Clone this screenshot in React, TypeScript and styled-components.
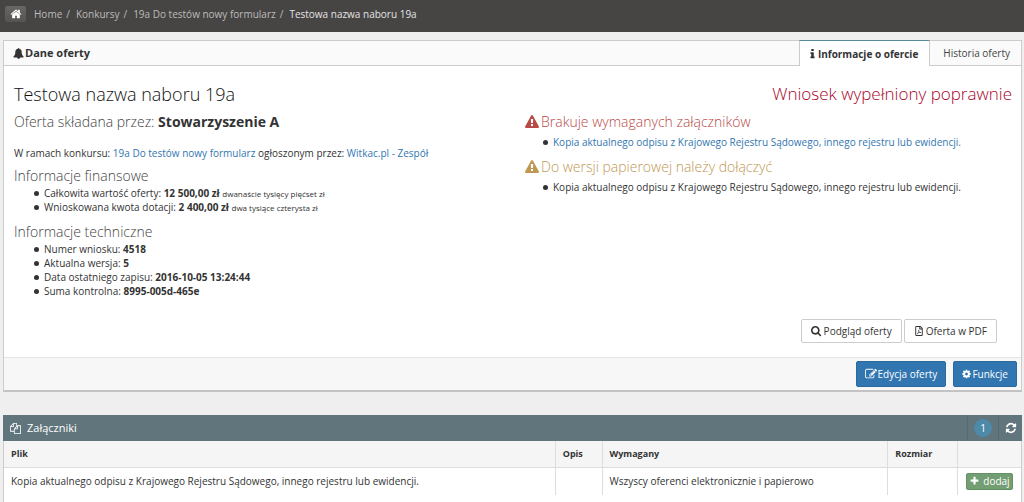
import React from "react";
import styled, { createGlobalStyle, css } from "styled-components";
import { FaRegFilePdf } from "react-icons/fa";

const Global = createGlobalStyle`
  *, *::before, *::after { box-sizing: border-box; }
  body {
    margin: 0;
    background: #efefef;
    color: #333;
    font-family: "Open Sans", "Liberation Sans", sans-serif;
    font-size: 10px;
    line-height: 14px;
  }
  a { color: #3276b1; text-decoration: none; }
  h1, h2, h3, p, ul, ol { margin: 0; padding: 0; }
`;

const glyphs = {
  home: { x: 0, w: 1792, d: "M1472 992v480q0 26-19 45t-45 19h-384v-384h-256v384h-384q-26 0-45-19t-19-45v-480q0-1 .5-3t.5-3l575-474 575 474q1 2 1 6zm223-69l-62 74q-8 9-21 11h-3q-13 0-21-7l-692-577-692 577q-12 8-24 7-13-2-21-11l-62-74q-8-10-7-23.5t11-21.5l719-599q32-26 76-26t76 26l244 204v-195q0-14 9-23t23-9h192q14 0 23 9t9 23v408l219 182q10 8 11 21.5t-7 23.5z" },
  bell: { x: 0, w: 1792, d: "M912 1696q0-16-16-16-59 0-101.5-42.5t-42.5-101.5q0-16-16-16t-16 16q0 73 51.5 124.5t124.5 51.5q16 0 16-16zm816-288q0 52-38 90t-90 38h-448q0 106-75 181t-181 75-181-75-75-181h-448q-52 0-90-38t-38-90q50-42 91-88t85-119.5 74.5-158.5 50-206 19.5-260q0-152 117-282.5t307-158.5q-8-19-8-39 0-40 28-68t68-28 68 28 28 68q0 20-8 39 190 28 307 158.5t117 282.5q0 139 19.5 260t50 206 74.5 158.5 85 119.5 91 88z" },
  info: { x: 512, w: 768, d: "M1216 1344v128q0 26-19 45t-45 19h-512q-26 0-45-19t-19-45v-128q0-26 19-45t45-19h64v-384h-64q-26 0-45-19t-19-45v-128q0-26 19-45t45-19h384q26 0 45 19t19 45v576h64q26 0 45 19t19 45zm-128-1152v192q0 26-19 45t-45 19h-256q-26 0-45-19t-19-45v-192q0-26 19-45t45-19h256q26 0 45 19t19 45z" },
  warning: { x: 0, w: 1792, d: "M1024 1375v-190q0-14-9.5-23.5t-22.5-9.5h-192q-13 0-22.5 9.5t-9.5 23.5v190q0 14 9.5 23.5t22.5 9.5h192q13 0 22.5-9.5t9.5-23.5zm-2-374l18-459q0-12-10-19-13-11-24-11h-220q-11 0-24 11-10 7-10 21l17 457q0 10 10 16.5t24 6.5h185q14 0 23.5-6.5t10.5-16.5zm-14-934l768 1408q35 63-2 126-17 29-46.5 46t-63.5 17h-1536q-34 0-63.5-17t-46.5-46q-37-63-2-126l768-1408q17-31 47-49t65-18 65 18 47 49z" },
  search: { x: 0, w: 1792, d: "M1152 704q0-185-131.5-316.5t-316.5-131.5-316.5 131.5-131.5 316.5 131.5 316.5 316.5 131.5 316.5-131.5 131.5-316.5zm512 832q0 52-38 90t-90 38q-54 0-90-38l-343-342q-179 124-399 124-143 0-273.5-55.5t-225-150-150-225-55.5-273.5 55.5-273.5 150-225 225-150 273.5-55.5 273.5 55.5 225 150 150 225 55.5 273.5q0 220-124 399l343 343q37 37 37 90z" },
  edit: { x: 0, w: 1792, d: "M888 1184l116-116-152-152-116 116v56h96v96h56zm440-720q-16-16-33 1l-350 350q-17 17-1 33t33-1l350-350q17-17 1-33zm80 594v190q0 119-84.5 203.5t-203.5 84.5h-832q-119 0-203.5-84.5t-84.5-203.5v-832q0-119 84.5-203.5t203.5-84.5h832q63 0 117 25 15 7 18 23 3 17-9 29l-49 49q-14 14-32 8-23-6-45-6h-832q-66 0-113 47t-47 113v832q0 66 47 113t113 47h832q66 0 113-47t47-113v-126q0-13 9-22l64-64q15-15 35-7t20 29zm-96-738l288 288-672 672h-288v-288zm444 132l-92 92-288-288 92-92q28-28 68-28t68 28l152 152q28 28 28 68t-28 68z" },
  cog: { x: 128, w: 1536, d: "M1152 896q0-106-75-181t-181-75-181 75-75 181 75 181 181 75 181-75 75-181zm512-109v222q0 12-8 23t-20 13l-185 28q-19 54-39 91 35 50 107 138 10 12 10 25t-9 23q-27 37-99 108t-94 71q-12 0-26-9l-138-108q-44 23-91 38-16 136-29 186-7 28-36 28h-222q-14 0-24.5-8.5t-11.5-21.5l-28-184q-49-16-90-37l-141 107q-10 9-25 9-14 0-25-11-126-114-165-168-7-10-7-23 0-12 8-23 15-21 51-66.5t54-70.5q-27-50-41-99l-183-27q-13-2-21-12.5t-8-23.5v-222q0-12 8-23t19-13l186-28q14-46 39-92-40-57-107-138-10-12-10-24 0-10 9-23 26-36 98.5-107.5t94.5-71.5q13 0 26 10l138 107q44-23 91-38 16-136 29-186 7-28 36-28h222q14 0 24.5 8.5t11.5 21.5l28 184q49 16 90 37l142-107q9-9 24-9 13 0 25 10 129 119 165 170 7 8 7 22 0 12-8 23-15 21-51 66.5t-54 70.5q26 50 41 98l183 28q13 2 21 12.5t8 23.5z" },
  files: { x: 0, w: 1792, d: "M1696 384q40 0 68 28t28 68v1216q0 40-28 68t-68 28h-960q-40 0-68-28t-28-68v-288h-544q-40 0-68-28t-28-68v-672q0-40 20-88t48-76l408-408q28-28 76-48t88-20h416q40 0 68 28t28 68v328q68-40 128-40h416zm-544 213l-299 299h299v-299zm-640-384l-299 299h299v-299zm196 647l316-316v-416h-384v416q0 40-28 68t-68 28h-416v640h512v-256q0-40 20-88t48-76zm956 804v-1152h-384v416q0 40-28 68t-68 28h-416v640h896z" },
  refresh: { x: 0, w: 1792, d: "M1639 1056q0 5-1 7-64 268-268 434.5t-478 166.5q-146 0-282.5-55t-243.5-157l-129 129q-19 19-45 19t-45-19-19-45v-448q0-26 19-45t45-19h448q26 0 45 19t19 45-19 45l-137 137q71 66 161 102t187 36q134 0 250-65t186-179q11-17 53-117 8-23 30-23h192q13 0 22.5 9.5t9.5 22.5zm25-800v448q0 26-19 45t-45 19h-448q-26 0-45-19t-19-45 19-45l138-138q-148-137-349-137-134 0-250 65t-186 179q-11 17-53 117-8 23-30 23h-199q-13 0-22.5-9.5t-9.5-22.5v-7q65-268 270-434.5t480-166.5q146 0 284 55.5t245 156.5l130-129q19-19 45-19t45 19 19 45z" },
  plus: { x: 128, w: 1536, d: "M1600 736v192q0 40-28 68t-68 28h-416v416q0 40-28 68t-68 28h-192q-40 0-68-28t-28-68v-416h-416q-40 0-68-28t-28-68v-192q0-40 28-68t68-28h416v-416q0-40 28-68t68-28h192q40 0 68 28t28 68v416h416q40 0 68 28t28 68z" },
};

function Icon({ name, size = 12 }: { name: keyof typeof glyphs; size?: number }) {
  const { x, w, d } = glyphs[name];
  return (
    <svg
      width={Math.round((size * w) / 1792)}
      height={size}
      viewBox={`${x} 0 ${w} 1792`}
      fill="currentColor"
      aria-hidden="true"
    >
      <path d={d} />
    </svg>
  );
}

const TopBar = styled.header`
  display: flex;
  align-items: center;
  height: 32px;
  padding: 0 5px 4px;
  background: #474544;
`;

const HomeButton = styled.button`
  display: flex;
  align-items: center;
  justify-content: center;
  width: 21px;
  height: 16px;
  padding: 0;
  border: 0;
  border-radius: 2px;
  background: linear-gradient(#686665, #565453);
  color: #fff;
`;

const Crumbs = styled.ol`
  display: flex;
  margin-left: 8px;
  list-style: none;
  color: #bbb;
  a { color: inherit; }
  li + li::before { content: "/"; padding: 0 6px 0 4px; }
  li:last-child span { color: #e4e4e4; }
`;

const Content = styled.main`
  padding: 8px 2px 0 3px;
`;

const Panel = styled.section`
  border: 1px solid #ccc;
  border-bottom: 2px solid #c3c3c3;
  background: #fff;
`;

const PanelHead = styled.div`
  display: flex;
  justify-content: space-between;
  height: 25px;
  border-bottom: 1px solid #ccc;
  background: #fafafa;
`;

const PanelTitle = styled.h2`
  display: flex;
  align-items: center;
  gap: 1px;
  padding-left: 9px;
  font-size: 11px;
  font-weight: 700;
`;

const Tabs = styled.div`
  display: flex;
`;

const Tab = styled.button<{ $active?: boolean }>`
  display: flex;
  align-items: center;
  gap: 3px;
  height: 24px;
  padding: 0 11px 0 13px;
  border: 0;
  background: transparent;
  color: #444;
  font: inherit;
  ${({ $active }) =>
    $active &&
    css`
      height: 26px;
      margin-top: -1px;
      padding: 0 11px 0 10px;
      border: 1px solid #ccc;
      border-top: 1px solid #57889c;
      border-bottom: 0;
      background: #fff;
      color: #333;
      font-weight: 700;
    `}
`;

const PanelBody = styled.div`
  display: grid;
  grid-template-columns: 1fr 1fr;
  padding: 15px 9px 0 10px;
`;

const Title = styled.h1`
  font-size: 18px;
  line-height: 26px;
  font-weight: 300;
  color: #111;
`;

const Status = styled.h2`
  font-size: 17px;
  line-height: 26px;
  font-weight: 300;
  color: #a90329;
  text-align: right;
`;

const Subtitle = styled.h3<{ $color?: string }>`
  display: flex;
  align-items: center;
  gap: 2px;
  font-size: 14px;
  line-height: 20px;
  font-weight: 300;
  color: ${({ $color }) => $color ?? "#444"};
`;

const Applicant = styled(Subtitle)`
  display: block;
  margin: 5px 0 14px;
  strong { font-weight: 700; color: #333; }
`;

const Contest = styled.p`
  margin-bottom: 6px;
  line-height: 14px;
`;

const Bullets = styled.ul`
  padding-left: 30px;
  line-height: 14px;
  margin-bottom: 8px;
  list-style: none;
  small { font-size: 8px; line-height: 8px; }
  li::before {
    content: "";
    display: inline-block;
    width: 5px;
    height: 5px;
    margin: 0 5px 1px -10px;
    border-radius: 50%;
    background: #333;
  }
`;

const Alerts = styled.div`
  padding: 5px 0 0 12px;
`;

const AlertList = styled(Bullets)`
  padding-left: 28px;
  margin: 3px 0 8px;
`;

const Actions = styled.div`
  display: flex;
  justify-content: flex-end;
  gap: 2px;
  padding: 13px 24px 14px;
`;

const Button = styled.button<{ $primary?: boolean }>`
  display: flex;
  align-items: center;
  justify-content: center;
  gap: ${({ $primary }) => ($primary ? 1 : 2)}px;
  height: ${({ $primary }) => ($primary ? 26 : 24)}px;
  padding: 0 ${({ $primary }) => ($primary ? 8 : 9)}px;
  border: 1px solid ${({ $primary }) => ($primary ? "#2c699d" : "#ccc")};
  border-radius: 2px;
  background: ${({ $primary }) => ($primary ? "#3276b1" : "#fff")};
  color: ${({ $primary }) => ($primary ? "#fff" : "#333")};
  font: inherit;
`;

const PanelFoot = styled.div`
  display: flex;
  justify-content: flex-end;
  gap: 7px;
  padding: 3px 4px;
  border-top: 1px solid #e4e4e4;
  background: #f7f7f7;
`;

const Widget = styled.section`
  margin-top: 23px;
  border: 1px solid #ccc;
  border-top: 0;
  background: #fff;
`;

const WidgetHead = styled.div`
  display: flex;
  align-items: center;
  height: 26px;
  margin: 0 -1px;
  padding-left: 7px;
  background: #61757c;
  color: #fff;
`;

const WidgetTitle = styled.h2`
  display: flex;
  flex: 1;
  align-items: center;
  gap: 6px;
  font-size: 11px;
  font-weight: 400;
`;

const HeadCell = styled.div`
  display: flex;
  align-items: center;
  justify-content: center;
  height: 26px;
  border-left: 1px solid #566a71;
`;

const CountCell = styled(HeadCell)`
  width: 31px;
`;

const Count = styled.span`
  width: 18px;
  border-radius: 9px;
  background: #4c8aa8;
  line-height: 18px;
  text-align: center;
`;

const Refresh = styled.button`
  display: flex;
  justify-content: center;
  width: 23px;
  padding: 0;
  border: 0;
  background: transparent;
  color: #fff;
`;

const Table = styled.table`
  width: 100%;
  border-collapse: collapse;
  table-layout: fixed;
  th, td {
    padding: 0 7px;
    border-left: 1px solid #ddd;
    text-align: left;
    vertical-align: middle;
  }
  th:first-child, td:first-child { border-left: 0; }
  td:last-child { padding-left: 8px; }
  th { height: 26px; border-bottom: 1px solid #ddd; background: #f5f5f5; font-size: 9px; font-weight: 700; }
  td { height: 28px; }
`;

const AddButton = styled.button`
  display: flex;
  align-items: center;
  justify-content: center;
  gap: 4px;
  width: 47px;
  height: 17px;
  padding: 0;
  border: 1px solid #659265;
  border-radius: 2px;
  background: #739e73;
  color: #fff;
  font: inherit;
`;

const WidgetEnd = styled.div`
  height: 7px;
`;

const attachment = "Kopia aktualnego odpisu z Krajowego Rejestru Sądowego, innego rejestru lub ewidencji.";

export default function App() {
  return (
    <>
      <Global />
      <TopBar>
        <HomeButton aria-label="Home"><Icon name="home" size={12} /></HomeButton>
        <nav>
          <Crumbs>
            <li><a href="#home">Home</a></li>
            <li><a href="#konkursy">Konkursy</a></li>
            <li><a href="#formularz">19a Do testów nowy formularz</a></li>
            <li><span>Testowa nazwa naboru 19a</span></li>
          </Crumbs>
        </nav>
      </TopBar>
      <Content>
        <Panel>
          <PanelHead>
            <PanelTitle><Icon name="bell" size={11} />Dane oferty</PanelTitle>
            <Tabs role="tablist">
              <Tab $active role="tab" aria-selected="true"><Icon name="info" size={12} />Informacje o ofercie</Tab>
              <Tab role="tab" aria-selected="false">Historia oferty</Tab>
            </Tabs>
          </PanelHead>
          <PanelBody>
            <div>
              <Title>Testowa nazwa naboru 19a</Title>
              <Applicant>Oferta składana przez: <strong>Stowarzyszenie A</strong></Applicant>
              <Contest>
                W ramach konkursu: <a href="#konkurs">19a Do testów nowy formularz</a> ogłoszonym przez:{" "}
                <a href="#zespol">Witkac.pl - Zespół</a>
              </Contest>
              <Subtitle>Informacje finansowe</Subtitle>
              <Bullets>
                <li>Całkowita wartość oferty: <strong>12 500,00 zł</strong> <small>dwanaście tysięcy pięćset zł</small></li>
                <li>Wnioskowana kwota dotacji: <strong>2 400,00 zł</strong> <small>dwa tysiące czterysta zł</small></li>
              </Bullets>
              <Subtitle>Informacje techniczne</Subtitle>
              <Bullets>
                <li>Numer wniosku: <strong>4518</strong></li>
                <li>Aktualna wersja: <strong>5</strong></li>
                <li>Data ostatniego zapisu: <strong>2016-10-05 13:24:44</strong></li>
                <li>Suma kontrolna: <strong>8995-005d-465e</strong></li>
              </Bullets>
            </div>
            <div>
              <Status>Wniosek wypełniony poprawnie</Status>
              <Alerts>
                <Subtitle $color="#b94a48"><Icon name="warning" size={14} />Brakuje wymaganych załączników</Subtitle>
                <AlertList><li><a href="#zalacznik">{attachment}</a></li></AlertList>
                <Subtitle $color="#c09853"><Icon name="warning" size={14} />Do wersji papierowej należy dołączyć</Subtitle>
                <AlertList><li>{attachment}</li></AlertList>
              </Alerts>
            </div>
          </PanelBody>
          <Actions>
            <Button><Icon name="search" size={11} />Podgląd oferty</Button>
            <Button><FaRegFilePdf size={10} />Oferta w PDF</Button>
          </Actions>
          <PanelFoot>
            <Button $primary><Icon name="edit" size={12} />Edycja oferty</Button>
            <Button $primary><Icon name="cog" size={10} />Funkcje</Button>
          </PanelFoot>
        </Panel>
        <Widget>
          <WidgetHead>
            <WidgetTitle><Icon name="files" size={11} />Załączniki</WidgetTitle>
            <CountCell><Count>1</Count></CountCell>
            <HeadCell><Refresh aria-label="Odśwież"><Icon name="refresh" size={12} /></Refresh></HeadCell>
          </WidgetHead>
          <Table>
            <colgroup>
              <col />
              <col style={{ width: "4.6%" }} />
              <col style={{ width: "28.1%" }} />
              <col style={{ width: "6.9%" }} />
              <col style={{ width: "6.2%" }} />
            </colgroup>
            <thead>
              <tr><th>Plik</th><th>Opis</th><th>Wymagany</th><th>Rozmiar</th><th aria-label="Akcje" /></tr>
            </thead>
            <tbody>
              <tr>
                <td>{attachment}</td>
                <td />
                <td>Wszyscy oferenci elektronicznie i papierowo</td>
                <td />
                <td><AddButton><Icon name="plus" size={10} />dodaj</AddButton></td>
              </tr>
            </tbody>
          </Table>
          <WidgetEnd />
        </Widget>
      </Content>
    </>
  );
}
